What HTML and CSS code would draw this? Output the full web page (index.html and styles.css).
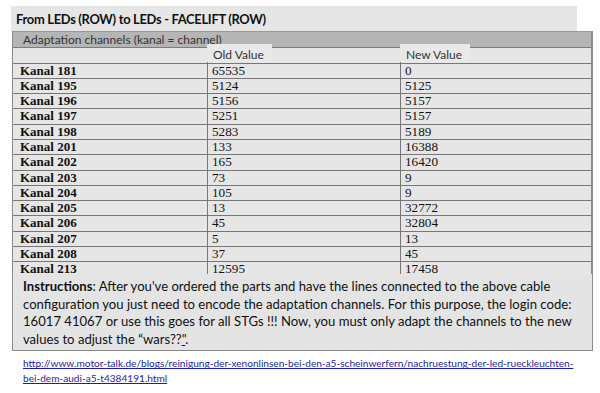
FILE: index.html
```html
<!DOCTYPE html>
<html>
<head>
<meta charset="utf-8">
<link rel="stylesheet" href="styles.css">
</head>
<body>
<div class="page">
  <div class="title">From LEDs (ROW) to LEDs - FACELIFT (ROW)</div>
  <div class="table">
    <div class="band"><span class="band-label">Adaptation channels (kanal = channel)</span></div>
    <div class="row head">
      <div class="cell c1"></div>
      <div class="cell c2"><span class="hlabel">Old Value</span></div>
      <div class="cell c3"><span class="hlabel">New Value</span></div>
    </div>
    <div class="row"><div class="cell c1">Kanal 181</div><div class="cell c2">65535</div><div class="cell c3">0</div></div>
    <div class="row"><div class="cell c1">Kanal 195</div><div class="cell c2">5124</div><div class="cell c3">5125</div></div>
    <div class="row"><div class="cell c1">Kanal 196</div><div class="cell c2">5156</div><div class="cell c3">5157</div></div>
    <div class="row"><div class="cell c1">Kanal 197</div><div class="cell c2">5251</div><div class="cell c3">5157</div></div>
    <div class="row"><div class="cell c1">Kanal 198</div><div class="cell c2">5283</div><div class="cell c3">5189</div></div>
    <div class="row"><div class="cell c1">Kanal 201</div><div class="cell c2">133</div><div class="cell c3">16388</div></div>
    <div class="row"><div class="cell c1">Kanal 202</div><div class="cell c2">165</div><div class="cell c3">16420</div></div>
    <div class="row"><div class="cell c1">Kanal 203</div><div class="cell c2">73</div><div class="cell c3">9</div></div>
    <div class="row"><div class="cell c1">Kanal 204</div><div class="cell c2">105</div><div class="cell c3">9</div></div>
    <div class="row"><div class="cell c1">Kanal 205</div><div class="cell c2">13</div><div class="cell c3">32772</div></div>
    <div class="row"><div class="cell c1">Kanal 206</div><div class="cell c2">45</div><div class="cell c3">32804</div></div>
    <div class="row"><div class="cell c1">Kanal 207</div><div class="cell c2">5</div><div class="cell c3">13</div></div>
    <div class="row"><div class="cell c1">Kanal 208</div><div class="cell c2">37</div><div class="cell c3">45</div></div>
    <div class="row last"><div class="cell c1">Kanal 213</div><div class="cell c2">12595</div><div class="cell c3">17458</div></div>
  </div>
  <div class="instructions"><b>Instructions</b>: After you've ordered the parts and have the lines connected to the above cable configuration you just need to encode the adaptation channels. For this purpose, the login code: 16017 41067 or use this goes for all STGs !!! Now, you must only adapt the channels to the new values to adjust the “wars??<u>"</u>.</div>
  <a class="link" href="#">http://www.motor-talk.de/blogs/reinigung-der-xenonlinsen-bei-den-a5-scheinwerfern/nachruestung-der-led-rueckleuchten-bei-dem-audi-a5-t4384191.html</a>
</div>
</body>
</html>
```

FILE: styles.css
```css
html, body {
  margin: 0;
  padding: 0;
  background: #ffffff;
}
.page {
  width: 600px;
  height: 393px;
  overflow: hidden;
  padding-top: 6px;
  box-sizing: border-box;
}
.title {
  margin-left: 11px;
  width: 561px;
  height: 25px;
  line-height: 26px;
  padding-left: 5px;
  background: #e6e6e6;
  font-family: Lato, "Liberation Sans", sans-serif;
  font-weight: bold;
  font-size: 12.9px;
  letter-spacing: -0.3px;
  color: #111;
}
.table {
  margin-left: 12px;
  width: 581px;
  box-sizing: border-box;
  border-left: 1.5px solid #8a8a8a;
  border-right: 2px solid #8a8a8a;
  background: #e6e6e6;
}
.band {
  height: 17px;
  background: #b5b5b5;
  border-top: 1px solid #9a9a9a;
  border-bottom: 1.5px solid #7c7c7c;
  box-sizing: border-box;
  font-family: Lato, "Liberation Sans", sans-serif;
  font-size: 12px;
  line-height: 15px;
  color: #333;
  padding-left: 10px;
}
.row {
  display: grid;
  grid-template-columns: 194px 193px 1fr;
  height: 15.3px;
  box-sizing: border-box;
  border-bottom: 1.5px solid #777;
  font-family: "Liberation Serif", "Times New Roman", serif;
  font-size: 13.2px;
  line-height: 14px;
  color: #111;
}
.row.head {
  height: 15.5px;
}
.row.last {
  height: 12px;
  overflow: hidden;
  border-bottom: none;
}
.cell {
  padding-left: 5px;
  white-space: nowrap;
}
.cell.c1 {
  font-weight: bold;
  font-size: 13px;
  padding-left: 7px;
}
.cell.c2, .cell.c3 {
  border-left: 1.5px solid #777;
  padding-left: 4px;
}
.hlabel {
  display: inline-block;
  margin-top: -5px;
  margin-left: -5px;
  padding: 3px 8px 0 6px;
  height: 15px;
  background: #e9e9e9;
  font-family: Lato, "Liberation Sans", sans-serif;
  font-size: 12px;
  line-height: 15px;
  color: #333;
}
.instructions {
  margin-left: 12px;
  width: 581px;
  height: 77px;
  box-sizing: border-box;
  background: #e4e4e4;
  border: 1.5px solid #8a8a8a;
  border-top: none;
  padding: 4px 6px 0 10px;
  font-family: Lato, "Liberation Sans", sans-serif;
  font-size: 13.1px;
  line-height: 17.4px;
  color: #111;
}
.link {
  display: block;
  margin: 5px 0 0 23px;
  width: 565px;
  font-family: Lato, "Liberation Sans", sans-serif;
  font-size: 10.1px;
  line-height: 14.5px;
  color: #1d1dad;
  text-decoration: underline;
}
```
